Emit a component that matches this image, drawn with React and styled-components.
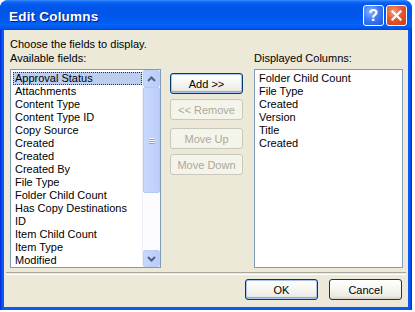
import React from "react";
import styled, { createGlobalStyle, css } from "styled-components";

const Global = createGlobalStyle`
  html, body { margin: 0; padding: 0; background: #ffffff; }
  body { font-family: Tahoma, "Liberation Sans", Arial, sans-serif; font-size: 11px; color: #000; }
`;

const Window = styled.div`
  width: 412px;
  height: 310px;
  box-sizing: border-box;
  display: flex;
  flex-direction: column;
  border-radius: 8px 8px 0 0;
  background: linear-gradient(to right, #0019CF 0px, #0845E8 1px, #0A5BF4 3px, #0A5BF4 calc(100% - 3px), #0845E8 calc(100% - 1px), #0019CF 100%);
  overflow: hidden;
`;

const TitleBar = styled.div`
  height: 30px;
  flex: 0 0 30px;
  display: flex;
  align-items: center;
  padding: 0 5px 0 9px;
  box-sizing: border-box;
  border-radius: 8px 8px 0 0;
  background: linear-gradient(to bottom, #3E8EFF 0px, #0E66F5 2px, #0058EE 5px, #0054E8 12px, #005AEF 20px, #0462F7 25px, #0058EE 28px, #0041D8 30px);
`;

const Title = styled.div`
  flex: 1;
  color: #ffffff;
  font-family: "Trebuchet MS", "Liberation Sans", Arial, sans-serif;
  font-weight: bold;
  font-size: 13.5px;
  text-shadow: 1px 1px 0 #0A1883;
  letter-spacing: 0.2px;
  padding-top: 3px;
`;

const CaptionButtons = styled.div`
  display: flex;
  gap: 2px;
  padding-top: 1px;
`;

const CapBtn = styled.div`
  width: 21px;
  height: 21px;
  box-sizing: border-box;
  border: 1px solid #ffffff;
  border-radius: 3px;
  display: flex;
  align-items: center;
  justify-content: center;
  color: #ffffff;
  font-family: "Liberation Sans", Arial, sans-serif;
  font-weight: bold;
  font-size: 16px;
  ${(p) =>
    p.$kind === "close"
      ? css`
          background: radial-gradient(circle at 35% 30%, #F39B7C 0%, #E5582F 45%, #C83C14 100%);
        `
      : css`
          background: radial-gradient(circle at 35% 30%, #8FB3FF 0%, #3C7BF5 45%, #1F55DA 100%);
        `}
`;

const Body = styled.div`
  flex: 1;
  margin: 0 4px 4px 4px;
  background: #ECE9D8;
  padding: 8px 5px 7px 6px;
  display: flex;
  flex-direction: column;
`;

const Line = styled.div`
  line-height: 13px;
  height: 13px;
  white-space: nowrap;
`;

const Row = styled.div`
  display: flex;
  margin-top: 1px;
`;

const Column = styled.div`
  display: flex;
  flex-direction: column;
  width: ${(p) => p.$w}px;
  margin-left: ${(p) => p.$ml || 0}px;
`;

const ListBox = styled.div`
  margin-top: 4px;
  height: 199px;
  box-sizing: border-box;
  border: 1px solid #7F9DB9;
  background: #ffffff;
  display: flex;
`;

const Items = styled.div`
  flex: 1;
  padding: 2px 0 0 2px;
  overflow: hidden;
`;

const Item = styled.div`
  height: 13px;
  line-height: 13px;
  padding-left: 2px;
  white-space: nowrap;
  box-sizing: border-box;
  ${(p) =>
    p.$selected &&
    css`
      background: #BCCDEE;
      outline: 1px dotted #333;
      outline-offset: -1px;
    `}
`;

const ScrollBar = styled.div`
  width: 17px;
  display: flex;
  flex-direction: column;
  background: #FCFCFE;
  border-left: 1px solid #EEF1FA;
`;

const ScrollBtn = styled.div`
  height: 17px;
  flex: 0 0 17px;
  box-sizing: border-box;
  border: 1px solid #BBCEF8;
  border-radius: 2px;
  background: linear-gradient(to right, #C8D7FD, #B9CBF8);
  display: flex;
  align-items: center;
  justify-content: center;
`;

const Thumb = styled.div`
  flex: 0 0 106px;
  box-sizing: border-box;
  border: 1px solid #B5C9F6;
  border-radius: 2px;
  background: linear-gradient(to right, #C9D8FE, #BCCEFB);
  display: flex;
  flex-direction: column;
  align-items: center;
  justify-content: center;
  gap: 1px;
`;

const Grip = styled.div`
  width: 6px;
  height: 1px;
  background: #EEF3FF;
  box-shadow: 0 1px 0 #8CA5E1;
`;

const Track = styled.div`
  flex: 1;
`;

const Buttons = styled.div`
  display: flex;
  flex-direction: column;
  padding-top: 21px;
`;

const Button = styled.div`
  width: 73px;
  height: 21px;
  box-sizing: border-box;
  border-radius: 3px;
  display: flex;
  align-items: center;
  justify-content: center;
  margin-top: ${(p) => p.$mt || 0}px;
  white-space: nowrap;
  ${(p) =>
    p.$disabled
      ? css`
          border: 1px solid #CAC8BB;
          background: #F5F4EA;
          color: #ACA899;
        `
      : css`
          border: 1px solid #003C74;
          background: linear-gradient(to bottom, #FFFFFF 0%, #F6F5F0 50%, #ECEBE4 85%, #D6D0C5 100%);
          color: #000;
        `}
  ${(p) =>
    p.$default &&
    css`
      box-shadow: inset 0 0 0 1px #A8C3F0, inset 0 -1px 0 1px #89ADE4;
    `}
`;

const Separator = styled.div`
  margin: 4px -3px 0 -4px;
  height: 1px;
  border-top: 1px solid #ACA899;
  border-bottom: 1px solid #FFFFFF;
`;

const Footer = styled.div`
  display: flex;
  justify-content: flex-end;
  gap: 11px;
  margin-top: 4px;
  padding-right: 1px;
`;

const Chevron = ({ up }) => (
  <svg width="9" height="6" viewBox="0 0 9 6">
    <path
      d={up ? "M1 5 L4.5 1.5 L8 5" : "M1 1 L4.5 4.5 L8 1"}
      fill="none"
      stroke="#4D6185"
      strokeWidth="2"
    />
  </svg>
);

const available = [
  "Approval Status",
  "Attachments",
  "Content Type",
  "Content Type ID",
  "Copy Source",
  "Created",
  "Created",
  "Created By",
  "File Type",
  "Folder Child Count",
  "Has Copy Destinations",
  "ID",
  "Item Child Count",
  "Item Type",
  "Modified",
];

const displayed = ["Folder Child Count", "File Type", "Created", "Version", "Title", "Created"];

export default function App() {
  return (
    <>
      <Global />
      <Window>
        <TitleBar>
          <Title>Edit Columns</Title>
          <CaptionButtons>
            <CapBtn $kind="help">?</CapBtn>
            <CapBtn $kind="close">
              <svg width="11" height="11" viewBox="0 0 11 11">
                <path d="M1.5 1.5 L9.5 9.5 M9.5 1.5 L1.5 9.5" stroke="#fff" strokeWidth="2.2" strokeLinecap="square" />
              </svg>
            </CapBtn>
          </CaptionButtons>
        </TitleBar>
        <Body>
          <Line>Choose the fields to display.</Line>
          <Row>
            <Column $w={151}>
              <Line>Available fields:</Line>
              <ListBox>
                <Items>
                  {available.map((t, i) => (
                    <Item key={i} $selected={i === 0}>
                      {t}
                    </Item>
                  ))}
                </Items>
                <ScrollBar>
                  <ScrollBtn>
                    <Chevron up />
                  </ScrollBtn>
                  <Thumb>
                    <Grip />
                    <Grip />
                    <Grip />
                  </Thumb>
                  <Track />
                  <ScrollBtn>
                    <Chevron />
                  </ScrollBtn>
                </ScrollBar>
              </ListBox>
            </Column>
            <Column $w={73} $ml={9}>
              <Buttons>
                <Button $default>Add &gt;&gt;</Button>
                <Button $disabled $mt={5}>&lt;&lt; Remove</Button>
                <Button $disabled $mt={8}>Move Up</Button>
                <Button $disabled $mt={5}>Move Down</Button>
              </Buttons>
            </Column>
            <Column $w={149} $ml={11}>
              <Line>Displayed Columns:</Line>
              <ListBox>
                <Items>
                  {displayed.map((t, i) => (
                    <Item key={i}>{t}</Item>
                  ))}
                </Items>
              </ListBox>
            </Column>
          </Row>
          <Separator />
          <Footer>
            <Button $default>OK</Button>
            <Button>Cancel</Button>
          </Footer>
        </Body>
      </Window>
    </>
  );
}
